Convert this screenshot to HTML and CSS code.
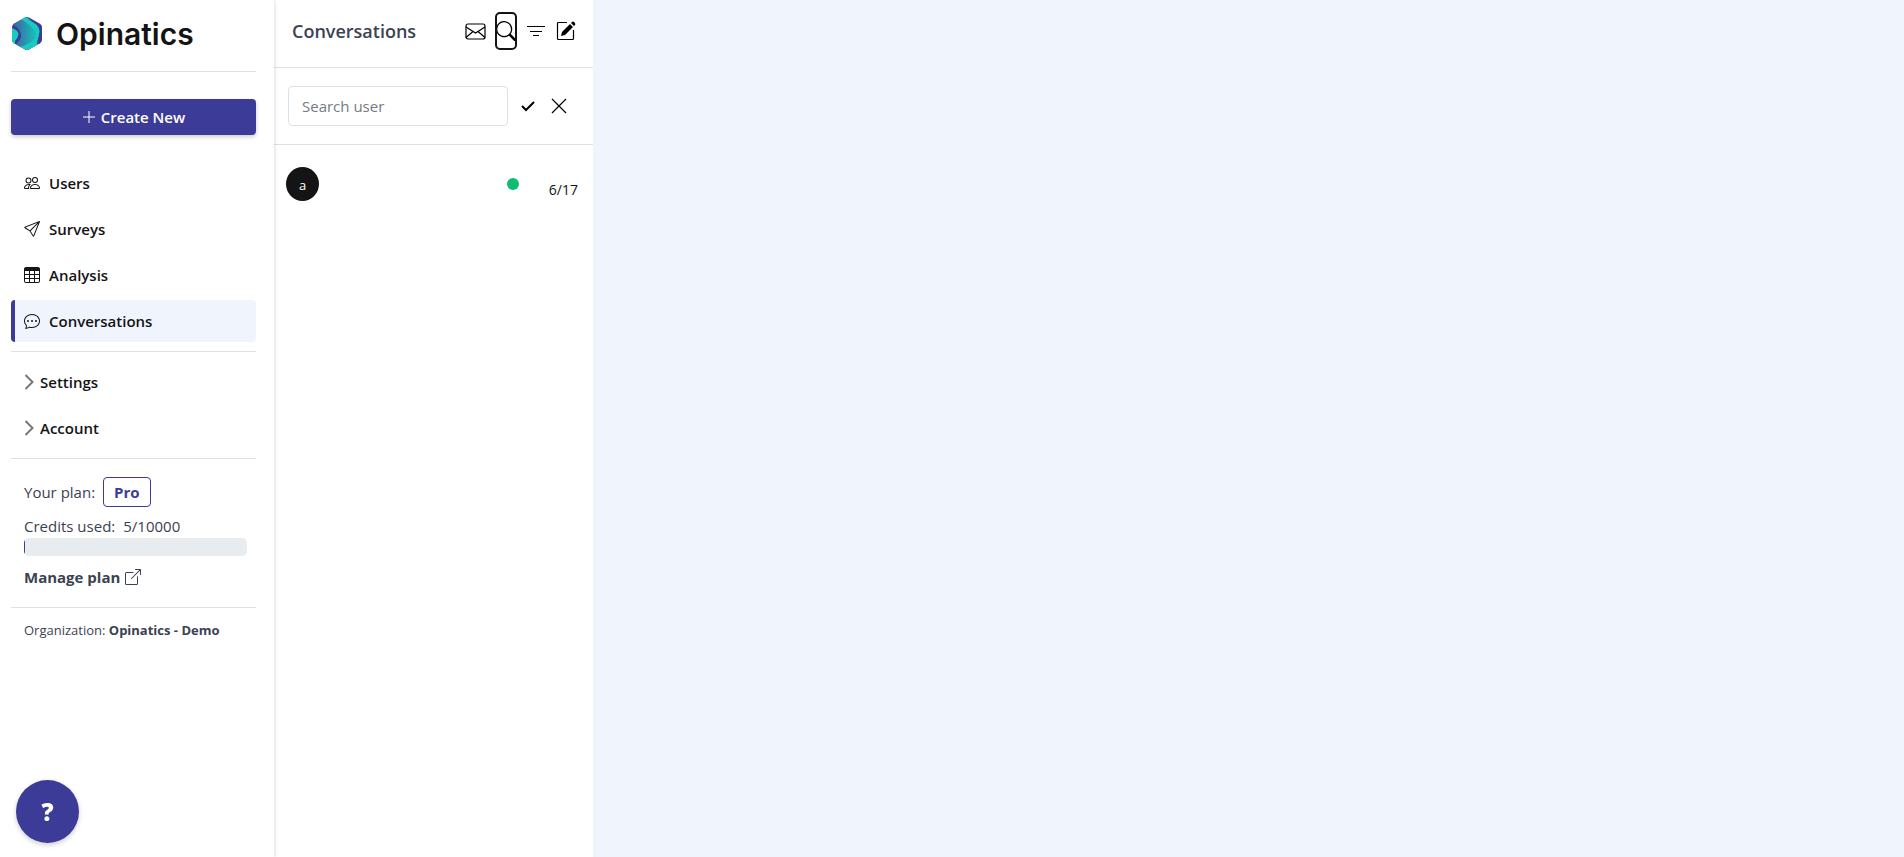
FILE: index.html
```html
<!DOCTYPE html>
<html lang="en">
<head>
  <meta charset="UTF-8">
  <meta name="viewport" content="width=device-width, initial-scale=1.0">
  <title>Opinatics</title>
  <link rel="stylesheet" href="styles.css">
</head>
<body>
  <div class="app">
    <aside class="sidebar">
      <a class="brand" href="#">
        <svg class="brand-logo" viewBox="0 0 30 33" aria-hidden="true">
          <defs>
            <linearGradient id="wave" x1="0" y1="0" x2="1" y2="0">
              <stop offset="0.1" stop-color="#3a68a4"/>
              <stop offset="0.9" stop-color="#17c3bb"/>
            </linearGradient>
            <clipPath id="hex"><path d="M13 .6Q15-.4 17 .6L28 6.8Q30 8 30 10V23Q30 25 28 26.2L17 32.4Q15 33.4 13 32.4L2 26.2Q0 25 0 23V10Q0 8 2 6.8Z"/></clipPath>
          </defs>
          <g clip-path="url(#hex)">
            <rect width="30" height="33" fill="#3c3c98"/>
            <path d="M0 7L9 0H16Q17 3 22 6Q29 10 27 18Q24 24 25 29L15 33L3 28Q10 22 9 18Q9 12 0 7Z" fill="url(#wave)"/>
            <path d="M9 2L14 0Q16 3 22 6Q29 10 27 18Q25 24 25 29L15 33L8 30Q24 25 24 17Q24 12 9 2Z" fill="#17cbbd"/>
            <path d="M0 11Q6 13 6.5 17Q6 21 3 24V29L0 27Z" fill="#17cbbd"/>
          </g>
        </svg>
        <span>Opinatics</span>
      </a>
      <hr>
      <button class="create-btn">
        <svg viewBox="0 0 14 14" aria-hidden="true"><path d="M7 1v12M1 7h12"/></svg>
        Create New
      </button>

      <nav class="menu">
        <a href="#">
          <svg viewBox="0 0 16 16"><path d="M15 14s1 0 1-1-1-4-5-4-5 3-5 4 1 1 1 1h8Zm-7.978-1A.261.261 0 0 1 7 12.996c.001-.264.167-1.03.76-1.72C8.312 10.629 9.282 10 11 10c1.717 0 2.687.63 3.24 1.276.593.69.758 1.457.76 1.72l-.008.002a.274.274 0 0 1-.014.002H7.022ZM11 7a2 2 0 1 0 0-4 2 2 0 0 0 0 4Zm3-2a3 3 0 1 1-6 0 3 3 0 0 1 6 0ZM6.936 9.28a5.88 5.88 0 0 0-1.23-.247A7.35 7.35 0 0 0 5 9c-4 0-5 3-5 4 0 .667.333 1 1 1h4.216A2.238 2.238 0 0 1 5 13c0-1.01.377-2.042 1.09-2.904.243-.294.526-.569.846-.816ZM4.92 10A5.493 5.493 0 0 0 4 13H1c0-.26.164-1.03.76-1.724.545-.636 1.492-1.256 3.16-1.275ZM1.5 5.5a3 3 0 1 1 6 0 3 3 0 0 1-6 0Zm3-2a2 2 0 1 0 0 4 2 2 0 0 0 0-4Z"/></svg>
          Users
        </a>
        <a href="#">
          <svg viewBox="0 0 16 16"><path d="M15.854.146a.5.5 0 0 1 .11.54l-5.819 14.547a.75.75 0 0 1-1.329.124l-3.178-4.995L.643 7.184a.75.75 0 0 1 .124-1.33L15.314.037a.5.5 0 0 1 .54.11ZM6.636 10.07l2.761 4.338L14.13 2.576 6.636 10.07Zm6.787-8.201L1.591 6.602l4.339 2.76 7.494-7.493Z"/></svg>
          Surveys
        </a>
        <a href="#">
          <svg viewBox="0 0 16 16"><path d="M0 2a2 2 0 0 1 2-2h12a2 2 0 0 1 2 2v12a2 2 0 0 1-2 2H2a2 2 0 0 1-2-2V2zm15 2h-4v3h4V4zm0 4h-4v3h4V8zm0 4h-4v3h3a1 1 0 0 0 1-1v-2zm-5 3v-3H6v3h4zm-5 0v-3H1v2a1 1 0 0 0 1 1h3zm-4-4h4V8H1v3zm0-4h4V4H1v3zm5-3v3h4V4H6zm4 4H6v3h4V8z"/></svg>
          Analysis
        </a>
        <a class="active" href="#">
          <svg viewBox="0 0 16 16"><path d="M5 8a1 1 0 1 1-2 0 1 1 0 0 1 2 0zm4 0a1 1 0 1 1-2 0 1 1 0 0 1 2 0zm3 1a1 1 0 1 0 0-2 1 1 0 0 0 0 2z"/><path d="m2.165 15.803.02-.004c1.83-.363 2.948-.842 3.468-1.105A9.06 9.06 0 0 0 8 15c4.418 0 8-3.134 8-7s-3.582-7-8-7-8 3.134-8 7c0 1.76.743 3.37 1.97 4.6a10.437 10.437 0 0 1-.524 2.318l-.003.011a10.722 10.722 0 0 1-.244.637c-.079.186.074.394.273.362a21.673 21.673 0 0 0 .693-.125zm.8-3.108a1 1 0 0 0-.287-.801C1.618 10.83 1 9.468 1 8c0-3.192 3.004-6 7-6s7 2.808 7 6c0 3.193-3.004 6-7 6a8.06 8.06 0 0 1-2.088-.272 1 1 0 0 0-.711.074c-.387.196-1.24.57-2.634.893a10.97 10.97 0 0 0 .398-2z"/></svg>
          Conversations
        </a>
      </nav>
      <hr>
      <div class="groups">
        <button><svg viewBox="0 0 9 16"><path d="M1 1l7 7-7 7"/></svg>Settings</button>
        <button><svg viewBox="0 0 9 16"><path d="M1 1l7 7-7 7"/></svg>Account</button>
      </div>
      <hr>
      <section class="plan">
        <div class="plan-row">Your plan: <span class="plan-badge">Pro</span></div>
        <div class="credits"><span>Credits used:</span><span>5/10000</span></div>
        <div class="progress"><div class="progress-bar"></div></div>
        <a class="manage" href="#">Manage plan
          <svg viewBox="0 0 16 16"><path d="M8.636 3.5a.5.5 0 0 0-.5-.5H1.5A1.5 1.5 0 0 0 0 4.5v10A1.5 1.5 0 0 0 1.5 16h10a1.5 1.5 0 0 0 1.5-1.5V7.864a.5.5 0 0 0-1 0V14.5a.5.5 0 0 1-.5.5h-10a.5.5 0 0 1-.5-.5v-10a.5.5 0 0 1 .5-.5h6.636a.5.5 0 0 0 .5-.5z"/><path d="M16 .5a.5.5 0 0 0-.5-.5h-5a.5.5 0 0 0 0 1h3.793L6.146 9.146a.5.5 0 1 0 .708.708L15 1.707V5.5a.5.5 0 0 0 1 0v-5z"/></svg>
        </a>
      </section>
      <hr>
      <p class="organization">Organization: <b>Opinatics - Demo</b></p>
    </aside>

    <section class="conversations">
      <header class="conv-header">
        <h1>Conversations</h1>
        <div class="conv-tools">
          <button aria-label="Messages"><svg width="21" height="17" viewBox="0 0 21 17"><rect x="1" y="1" width="19" height="15" rx="2"/><path d="M1 4l9.500 6L20 4M1 14.500l7-6M20 14.500l-7-6"/></svg></button>
          <button class="focused" aria-label="Search"><svg class="filled" width="20" height="20" viewBox="0 0 16 16"><path d="M11.742 10.344a6.5 6.5 0 1 0-1.397 1.398h-.001c.03.04.062.078.098.115l3.85 3.85a1 1 0 0 0 1.415-1.414l-3.85-3.85a1.007 1.007 0 0 0-.115-.1zM12 6.5a5.5 5.5 0 1 1-11 0 5.5 5.5 0 0 1 11 0z"/></svg></button>
          <button aria-label="Filter"><svg width="20" height="20" viewBox="0 0 20 20"><path d="M1 5.500h18M4 10.500h12M7 14.500h6"/></svg></button>
          <button aria-label="New conversation"><svg width="20" height="20" viewBox="0 0 20 20"><path d="M11 1.500H2.500Q1.500 1.500 1.500 2.500V17.500Q1.500 18.500 2.500 18.500H16.500Q17.500 18.500 17.500 17.500V9"/><path class="solid" d="M5 15l1-4L14 3l3 3-8 8zM15 2l1-1Q17 0 18.500 1.500T19 4L18 5z"/></svg></button>
        </div>
      </header>
      <form class="search">
        <input type="text" placeholder="Search user" aria-label="Search user">
        <button type="button" aria-label="Apply"><svg class="thick" width="14" height="14" viewBox="0 0 14 14"><path d="M1 7l4 4 8-8"/></svg></button>
        <button type="button" aria-label="Close"><svg width="16" height="16" viewBox="0 0 16 16"><path d="M1 1l14 14M15 1L1 15"/></svg></button>
      </form>
      <a class="conversation" href="#">
        <span class="avatar">a</span>
        <span class="online"></span>
        <time>6/17</time>
      </a>
    </section>

    <main class="chat"></main>
  </div>
  <button class="help">?</button>
</body>
</html>
```

FILE: styles.css
```css
* { box-sizing: border-box; }
body {
    margin: 0;
    background: #f0f4fd;
    color: #141414;
    font-family: "Open Sans", "Noto Sans", sans-serif;
    font-size: 15px;
    line-height: 24px;
}
a { color: inherit; text-decoration: none; }
button {
    padding: 0;
    border: 0;
    background: none;
    color: inherit;
    font: inherit;
    cursor: pointer;
}
svg { display: block; flex: none; }
hr {
    width: 100%;
    height: 1px;
    margin: 0;
    border: 0;
    background: #dee0e4;
}
.app { display: flex; min-height: 100vh; }

/* Sidebar */
.sidebar {
    flex: 0 0 274px;
    padding: 0 18px 0 11px;
    background: white;
    box-shadow: 0 0 4px rgba(0, 0, 0, 0.2);
    z-index: 1;
}
.brand {
    display: flex;
    align-items: center;
    gap: 14px;
    height: 71px;
    padding: 0 0 4px 1px;
    font-family: Inter, sans-serif;
    font-size: 30px;
    font-weight: 600;
}
.brand-logo { width: 30px; height: 33px; }
.create-btn {
    display: flex;
    align-items: center;
    justify-content: center;
    gap: 5px;
    width: 100%;
    height: 36px;
    margin: 27px 0;
    border-radius: 4px;
    background: #3c3c98;
    box-shadow: 0 2px 4px rgba(0, 0, 0, 0.2);
    color: white;
    font-weight: 600;
}
.create-btn svg { width: 14px; height: 14px; stroke: white; }
.menu, .groups {
    display: flex;
    flex-direction: column;
    gap: 4px;
}
.menu { padding-bottom: 9px; }
.menu a, .groups button {
    display: flex;
    align-items: center;
    height: 42px;
    padding-bottom: 1px;
    font-weight: 600;
}
.menu a {
    gap: 9px;
    padding-left: 9px;
    border-left: 4px solid transparent;
    border-radius: 4px;
}
.menu .active { border-left-color: #3c3c98; background: #f0f4fd; }
.menu svg { width: 16px; height: 16px; fill: currentColor; }
.groups { padding: 9px 0; }
.groups button { gap: 6px; padding-left: 13px; }
.groups svg {
    width: 10px;
    height: 16px;
    fill: none;
    stroke: #777;
    stroke-width: 2;
}
.plan { padding: 18px 9px 18px 13px; color: #3b4252; }
.plan-row {
    display: flex;
    align-items: center;
    gap: 8px;
}
.plan-badge {
    padding: 2px 10px;
    border: 1px solid #3c3c98;
    border-radius: 4px;
    color: #3c3c98;
    font-weight: 700;
}
.credits { display: flex; gap: 8px; margin-top: 7px; }
.progress {
    height: 18px;
    overflow: hidden;
    border-radius: 5px;
    background: #e9ecef;
}
.progress-bar { width: 1px; height: 100%; background: #3c3c98; }
.manage {
    display: flex;
    align-items: center;
    gap: 5px;
    margin-top: 9px;
    font-weight: 700;
}
.manage svg { width: 16px; height: 16px; fill: currentColor; }
.organization {
    margin: 10px 13px;
    color: #3b4252;
    font-size: 13px;
}

/* Conversation list */
.conversations { flex: 0 0 319px; min-width: 0; background: white; }
.conv-header {
    display: flex;
    align-items: center;
    justify-content: space-between;
    height: 68px;
    padding: 0 17px 5px 18px;
    border-bottom: 1px solid #dee0e6;
}
.conv-header h1 {
    margin: 0;
    color: #3b4252;
    font-size: 18px;
    font-weight: 600;
}
.conv-tools { display: flex; align-items: center; gap: 10px; }
.conversations svg {
    fill: none;
    stroke: black;
    stroke-width: 1.2;
}
.conversations .filled { fill: black; stroke: none; }
.conversations .thick { stroke-width: 2; }
.conversations .solid { fill: black; stroke: none; }
.focused {
    padding: 8px 0;
    border-radius: 4px;
    outline: 2px solid #141414;
    outline-offset: -1px;
}
.search {
    display: flex;
    align-items: center;
    height: 77px;
    padding: 0 26px 0 14px;
    border-bottom: 1px solid #dee0e6;
}
.search input {
    flex: 1;
    min-width: 0;
    height: 40px;
    margin-right: 13px;
    padding: 0 13px;
    border: 1px solid #dee0e6;
    border-radius: 4px;
    font: inherit;
}
.search input::placeholder { color: #757b84; }
.search button + button { margin-left: 16px; }
.conversation {
    display: flex;
    align-items: center;
    padding: 21px 15px 21px 12px;
}
.avatar {
    width: 33px;
    height: 34px;
    border-radius: 50%;
    background: #141414;
    color: white;
    font-size: 13px;
    line-height: 36px;
    text-align: center;
}
.online {
    width: 12px;
    height: 12px;
    margin-left: auto;
    border-radius: 50%;
    background: #0fbc74;
}
.conversation time { margin-left: 30px; padding-top: 12px; font-size: 14px; }
.chat { flex: 1; }

.help {
    position: fixed;
    left: 16px;
    bottom: 14px;
    z-index: 2;
    width: 63px;
    height: 63px;
    border-radius: 50%;
    background: #3c3c98;
    box-shadow: 0 2px 5px rgba(0, 0, 0, 0.2);
    color: white;
    font-size: 24px;
    font-weight: 800;
}
```
